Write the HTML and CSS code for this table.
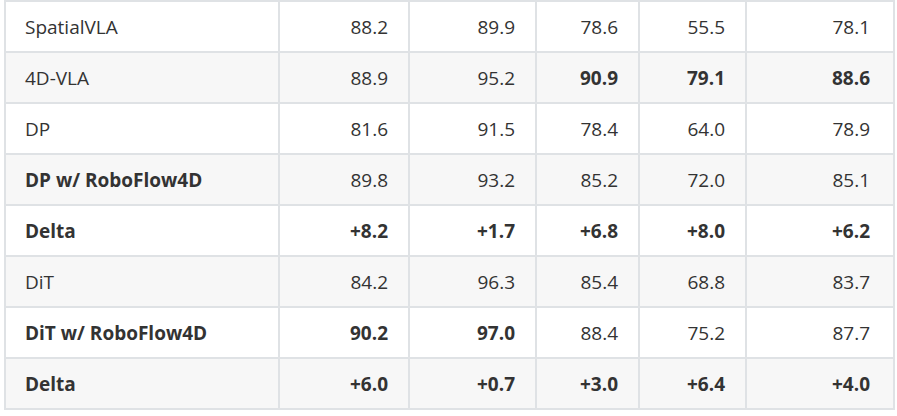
FILE: index.html
```html
<!DOCTYPE html>
<html>
<head>
<meta charset="utf-8">
<link rel="stylesheet" href="styles.css">
</head>
<body>
<div class="wrap">
<table class="results">
<colgroup>
<col class="c-name"><col class="c-a"><col class="c-b"><col class="c-c"><col class="c-d"><col class="c-e">
</colgroup>
<tbody>
<tr><td>SpatialVLA</td><td>88.2</td><td>89.9</td><td>78.6</td><td>55.5</td><td>78.1</td></tr>
<tr><td>4D-VLA</td><td>88.9</td><td>95.2</td><td class="b">90.9</td><td class="b">79.1</td><td class="b">88.6</td></tr>
<tr><td>DP</td><td>81.6</td><td>91.5</td><td>78.4</td><td>64.0</td><td>78.9</td></tr>
<tr><td class="b">DP w/ RoboFlow4D</td><td>89.8</td><td>93.2</td><td>85.2</td><td>72.0</td><td>85.1</td></tr>
<tr class="bold-row"><td>Delta</td><td>+8.2</td><td>+1.7</td><td>+6.8</td><td>+8.0</td><td>+6.2</td></tr>
<tr><td>DiT</td><td>84.2</td><td>96.3</td><td>85.4</td><td>68.8</td><td>83.7</td></tr>
<tr><td class="b">DiT w/ RoboFlow4D</td><td class="b">90.2</td><td class="b">97.0</td><td>88.4</td><td>75.2</td><td>87.7</td></tr>
<tr class="bold-row"><td>Delta</td><td>+6.0</td><td>+0.7</td><td>+3.0</td><td>+6.4</td><td>+4.0</td></tr>
</tbody>
</table>
</div>
</body>
</html>
```
FILE: styles.css
```css
html, body {
  margin: 0;
  padding: 0;
  background: #ffffff;
}
.wrap {
  padding: 0 4px 0 4px;
}
.results {
  width: 889px;
  border-collapse: collapse;
  table-layout: fixed;
  font-family: "Open Sans", "Liberation Sans", sans-serif;
  font-size: 19px;
  color: #333333;
  border-top: 2px solid #dfe2e5;
}
.c-name { width: 274px; }
.c-a { width: 130px; }
.c-b { width: 127px; }
.c-c { width: 103px; }
.c-d { width: 107px; }
.c-e { width: 148px; }
.results td {
  border: 2px solid #dfe2e5;
  padding: 0 20px;
  height: 49px;
  line-height: 26px;
  text-align: right;
}
.results td:first-child {
  text-align: left;
  padding-left: 19px;
}
.results td:last-child {
  padding-right: 23px;
}
.results tr:nth-child(even) {
  background: #f7f7f7;
}
.results .b,
.bold-row td {
  font-weight: 700;
}
```
